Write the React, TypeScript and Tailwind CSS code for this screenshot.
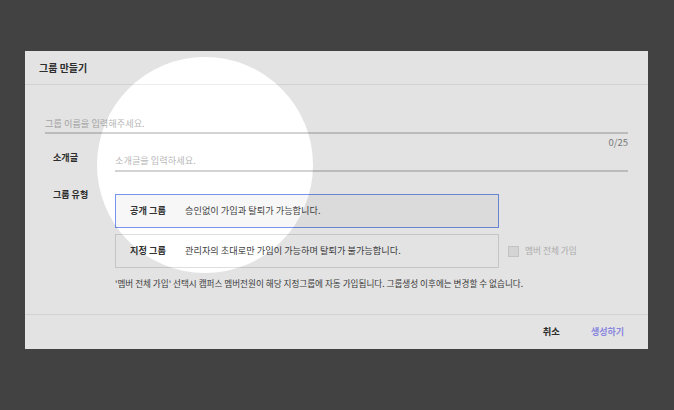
import React from 'react';

const font = "font-['Noto_Sans_CJK_KR','Noto_Sans',sans-serif]";

function TypeBox({ title, desc, active }: { title: string; desc: string; active?: boolean }) {
  return (
    <div
      className={`flex items-center w-[384px] h-[34px] pl-[14px] border ${
        active ? 'border-[#7694ee] bg-[#f7f7f7]' : 'border-[#dedede] bg-white'
      }`}
    >
      <span className="w-[55px] text-[9.2px] font-bold text-[#333] leading-none">{title}</span>
      <span className="text-[9.2px] text-[#444] leading-none">{desc}</span>
    </div>
  );
}

export default function App() {
  return (
    <div className={`w-full h-[410px] bg-[#424242] pt-[51px] pl-[25px] ${font}`}>
      <div className="relative w-[623px] h-[298px] bg-white overflow-hidden flex flex-col">
        {/* Header */}
        <div className="h-[34px] flex items-center px-[14px] border-b border-[#ececec]">
          <span className="text-[10px] font-bold text-[#333]">그룹 만들기</span>
        </div>

        {/* Body */}
        <div className="flex-1 flex flex-col">
          <div className="px-[20px] mt-[30px]">
            <div className="h-[19px] flex items-center border-b-2 border-[#d3d3d3]">
              <span className="text-[9.2px] text-[#b8b8b8] leading-none">그룹 이름을 입력해주세요.</span>
            </div>
            <div className="mt-[3px] text-right text-[9.5px] leading-[10px] text-[#888]">0/25</div>
          </div>

          <div className="flex items-start pl-[28px] pr-[20px] mt-[4px]">
            <span className="w-[62px] text-[9.1px] font-bold text-[#333] leading-[12px]">소개글</span>
            <div className="flex-1 h-[21px] flex items-center border-b-2 border-[#d3d3d3]">
              <span className="text-[9.2px] text-[#b8b8b8] leading-none">소개글을 입력하세요.</span>
            </div>
          </div>

          <div className="flex items-start pl-[28px] mt-[17px]">
            <span className="w-[62px] text-[9px] font-bold text-[#333] leading-[12px]">그룹 유형</span>
            <div className="flex flex-col mt-[5px]">
              <TypeBox active title="공개 그룹" desc="승인없이 가입과 탈퇴가 가능합니다." />
              <div className="flex items-center mt-[6px]">
                <TypeBox title="지정 그룹" desc="관리자의 초대로만 가입이 가능하며 탈퇴가 불가능합니다." />
                <div className="ml-[9px] w-[11px] h-[11px] border border-[#dcdcdc] bg-[#efefef]" />
                <span className="ml-[6px] text-[8.7px] text-[#c2c2c2] leading-none">멤버 전체 가입</span>
              </div>
              <p className="mt-[9px] text-[8.6px] leading-[12px] text-[#444]">
                '멤버 전체 가입' 선택시 캠퍼스 멤버전원이 해당 지정그룹에 자동 가입됩니다. 그룹생성 이후에는 변경할 수 없습니다.
              </p>
            </div>
          </div>
        </div>

        {/* Footer */}
        <div className="h-[35px] flex items-center justify-end pr-[24px] border-t border-[#ececec]">
          <button className="text-[9.3px] font-bold text-[#333]">취소</button>
          <button className="ml-[31px] text-[9px] font-bold text-[#9a97fa]">생성하기</button>
        </div>

        {/* Spotlight overlay */}
        <div className="pointer-events-none absolute left-[72px] top-[6px] w-[216px] h-[216px] rounded-full shadow-[0_0_0_1200px_rgba(0,0,0,0.11)]" />
      </div>
    </div>
  );
}
